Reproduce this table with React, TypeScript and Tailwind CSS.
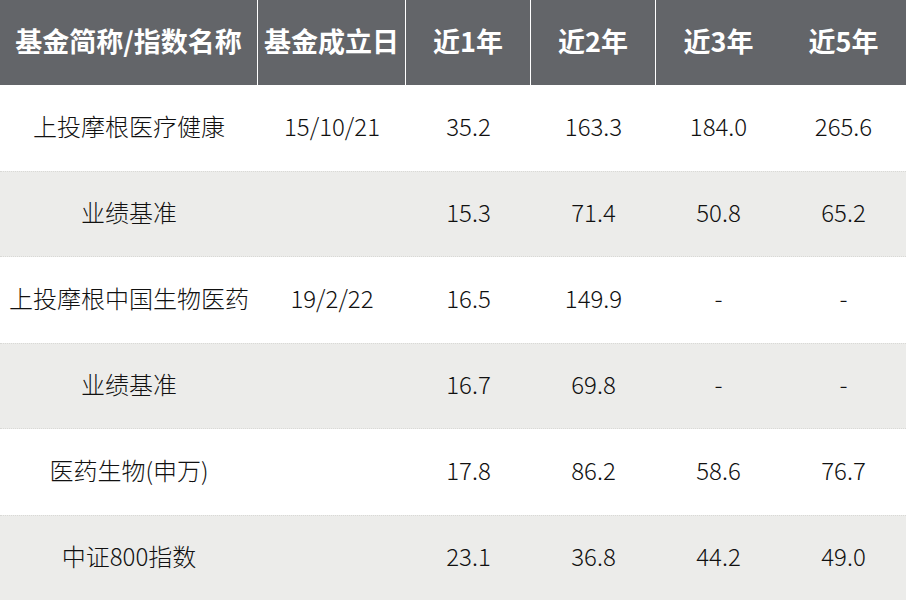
import React from 'react';

const cols = ['近1年', '近2年', '近3年', '近5年'];

const rows = [
  { name: '上投摩根医疗健康', date: '15/10/21', v: ['35.2', '163.3', '184.0', '265.6'] },
  { name: '业绩基准', date: '', v: ['15.3', '71.4', '50.8', '65.2'] },
  { name: '上投摩根中国生物医药', date: '19/2/22', v: ['16.5', '149.9', '-', '-'] },
  { name: '业绩基准', date: '', v: ['16.7', '69.8', '-', '-'] },
  { name: '医药生物(申万)', date: '', v: ['17.8', '86.2', '58.6', '76.7'] },
  { name: '中证800指数', date: '', v: ['23.1', '36.8', '44.2', '49.0'] },
];

export default function App() {
  return (
    <div
      className="w-[906px] h-[600px] overflow-hidden bg-white text-[#111]"
      style={{ fontFamily: '"Noto Sans CJK SC", "Noto Sans", sans-serif' }}
    >
      {/* header */}
      <div className="grid grid-cols-[258px_148px_125px_125px_125px_125px] h-[85px] bg-[#636569] text-white text-[27px] font-bold leading-none">
        <div className="flex items-center justify-center pb-[4px] border-r border-white whitespace-nowrap">基金简称/指数名称</div>
        <div className="flex items-center justify-center pb-[4px] border-r border-white whitespace-nowrap">基金成立日</div>
        {cols.map((c, i) => (
          <div
            key={c}
            className={`flex items-center justify-center pb-[4px] whitespace-nowrap ${i < 2 ? 'border-r border-white' : ''}`}
          >
            {c}
          </div>
        ))}
      </div>

      {/* body */}
      {rows.map((r, i) => (
        <div
          key={i}
          className={`grid grid-cols-[258px_148px_125px_125px_125px_125px] h-[86px] text-[24px] font-light leading-none ${
            i % 2 === 1 ? 'bg-[#ececea] border-y border-dotted border-[#d9d9d6]' : ''
          }`}
        >
          <div className="flex items-center justify-center pb-[4px] whitespace-nowrap">{r.name}</div>
          <div className="flex items-center justify-center pb-[4px]">{r.date}</div>
          {r.v.map((x, j) => (
            <div key={j} className="flex items-center justify-center pb-[4px]">{x}</div>
          ))}
        </div>
      ))}
    </div>
  );
}
